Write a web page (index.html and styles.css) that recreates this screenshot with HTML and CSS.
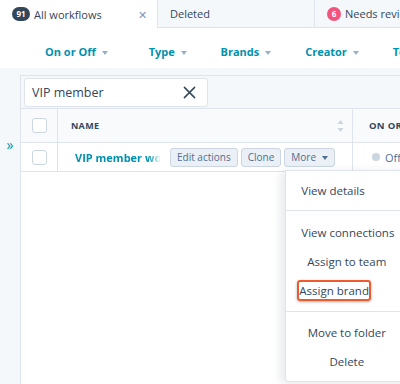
FILE: index.html
```html
<!DOCTYPE html>
<html lang="en">
<head>
  <meta charset="UTF-8">
  <title>workflows</title>
  <link rel="stylesheet" href="styles.css">
</head>
<body>

  <div class="tabs">
    <div class="tab active">
      <span class="badge">91</span>
      <span class="tab-label">All workflows</span>
      <span class="tab-close">&#x2715;</span>
    </div>
    <div class="tab">
      <span class="tab-label">Deleted</span>
    </div>
    <div class="tab last">
      <span class="badge pink">6</span>
      <span class="tab-label">Needs review</span>
    </div>
  </div>

  <div class="filters">
    <span class="filter first">On or Off <i class="caret"></i></span>
    <span class="filter">Type <i class="caret"></i></span>
    <span class="filter">Brands <i class="caret"></i></span>
    <span class="filter">Creator <i class="caret"></i></span>
    <span class="filter">Teams <i class="caret"></i></span>
  </div>

  <div class="main">
    <div class="sidebar">
      <span class="expand">&raquo;</span>
    </div>

    <div class="panel">
      <div class="toolbar">
        <div class="search">
          <span class="search-text">VIP member</span>
          <svg class="search-clear" width="13" height="13" viewBox="0 0 14 14">
            <path d="M1.5 1.5 L12.5 12.5 M12.5 1.5 L1.5 12.5" stroke="#33475b" stroke-width="1.6" stroke-linecap="round"/>
          </svg>
        </div>
      </div>

      <div class="table">
        <div class="row head">
          <div class="cell check"><span class="box"></span></div>
          <div class="cell name">
            <span>NAME</span>
            <svg class="sort" width="7" height="14" viewBox="0 0 7 14">
              <path d="M3.5 1 L6.5 5 H0.5 Z M3.5 13 L6.5 9 H0.5 Z" fill="#cbd6e2"/>
            </svg>
          </div>
          <div class="cell status">ON OR OFF</div>
        </div>
        <div class="row">
          <div class="cell check"><span class="box"></span></div>
          <div class="cell name">
            <span class="link">VIP member workflow</span>
            <span class="btn">Edit actions</span>
            <span class="btn">Clone</span>
            <span class="btn more">More <i class="caret dark"></i>
              <div class="menu">
                <div class="menu-group">
                  <div class="menu-item">View details</div>
                </div>
                <div class="menu-group">
                  <div class="menu-item">View connections</div>
                  <div class="menu-item center">Assign to team</div>
                  <div class="menu-item"><span class="marked">Assign brand</span></div>
                </div>
                <div class="menu-group">
                  <div class="menu-item center">Move to folder</div>
                  <div class="menu-item center">Delete</div>
                </div>
              </div>
            </span>
          </div>
          <div class="cell status"><span class="dot"></span>Off</div>
        </div>
      </div>
    </div>
  </div>

</body>
</html>
```

FILE: styles.css
```css
body {
  margin: 0;
  width: 400px;
  height: 384px;
  overflow: hidden;
  font-family: "Open Sans", "Noto Sans", sans-serif;
  color: #33475b;
  background-color: #fff;
}

/* tabs */
.tabs {
  display: flex;
  height: 28px;
}

.tab {
  flex: 0 0 157px;
  display: flex;
  align-items: center;
  box-sizing: border-box;
  padding-left: 12px;
  background-color: #f5f8fa;
  border-bottom: 1px solid #dfe3eb;
  border-left: 1px solid #dfe3eb;
  font-size: 11px;
  white-space: nowrap;
  overflow: hidden;
}

.tab.active {
  background-color: #fff;
  border: none;
  padding-right: 10px;
}

.tab.last {
  flex: 1;
}

.badge {
  display: inline-block;
  min-width: 18px;
  height: 14px;
  line-height: 14px;
  border-radius: 7px;
  background-color: #33475b;
  color: #fff;
  font-size: 8px;
  font-weight: bold;
  text-align: center;
  margin-right: 4px;
}

.badge.pink {
  min-width: 14px;
  background-color: #f2547d;
}

.tab-label {
  flex: 1;
}

.tab-close {
  color: #7c98b6;
  font-size: 11px;
}

/* filter row */
.filters {
  display: flex;
  align-items: center;
  height: 34px;
  padding: 6px 0 0 45px;
  gap: 34px;
  white-space: nowrap;
}

.filter {
  color: #0091ae;
  font-size: 11px;
  font-weight: bold;
}

.filter.first {
  margin-right: 7px;
}

.caret {
  display: inline-block;
  width: 0;
  height: 0;
  margin-left: 3px;
  vertical-align: middle;
  border-left: 3px solid transparent;
  border-right: 3px solid transparent;
  border-top: 4px solid #99afc4;
}

.caret.dark {
  border-top-color: #506e91;
}

/* main area */
.main {
  display: flex;
  height: 316px;
  background-color: #f5f8fa;
}

.sidebar {
  width: 20px;
  flex-shrink: 0;
  padding-top: 65px;
  text-align: center;
}

.expand {
  color: #0091ae;
  font-size: 14px;
  line-height: 14px;
}

.panel {
  flex: 1;
  margin-top: 7px;
  border-left: 1px solid #dfe3eb;
  border-top: 1px solid #dfe3eb;
  background-color: #fff;
}

.toolbar {
  padding: 2px 3px 1px;
  background-color: #f5f8fa;
}

.search {
  display: flex;
  align-items: center;
  width: 184px;
  height: 29px;
  box-sizing: border-box;
  padding: 0 11px 0 7px;
  background-color: #fff;
  border: 1px solid #dfe3eb;
  border-radius: 3px;
}

.search-text {
  flex: 1;
  font-size: 12.5px;
}

/* table */
.row {
  display: flex;
  height: 28px;
  border-top: 1px solid #dfe3eb;
  border-bottom: 1px solid #dfe3eb;
  margin-top: -1px;
}

.row.head {
  height: 33px;
  margin-top: 0;
  background-color: #f9fafc;
}

.cell {
  display: flex;
  align-items: center;
  box-sizing: border-box;
  white-space: nowrap;
}

.check {
  width: 37px;
  justify-content: center;
  border-right: 1px solid #dfe3eb;
}

.box {
  width: 13px;
  height: 13px;
  border: 1px solid #cbd6e2;
  border-radius: 3px;
  background-color: #fff;
}

.name {
  width: 295px;
  padding-left: 13px;
  border-right: 1px solid #dfe3eb;
}

.head .name span {
  flex: 1;
  font-size: 9px;
  font-weight: bold;
  letter-spacing: 0.3px;
}

.sort {
  margin-right: 8px;
}

.status {
  flex: 1;
  padding-left: 16px;
  font-size: 9.5px;
  font-weight: bold;
  letter-spacing: 0.3px;
  overflow: hidden;
}

.row:not(.head) .status {
  padding-left: 19px;
  font-weight: normal;
  font-size: 11px;
  letter-spacing: 0;
  color: #516f90;
}

.dot {
  width: 8px;
  height: 8px;
  border-radius: 50%;
  background-color: #cbd6e2;
  margin-right: 5px;
}

.link {
  width: 86px;
  margin-left: 4px;
  margin-right: 9px;
  overflow: hidden;
  color: #0091ae;
  font-size: 11px;
  font-weight: bold;
  -webkit-mask-image: linear-gradient(to right, #000 85%, transparent);
  mask-image: linear-gradient(to right, #000 85%, transparent);
}

.btn {
  position: relative;
  height: 17px;
  line-height: 17px;
  padding: 0 6px;
  margin-right: 3px;
  background-color: #eaf0f6;
  border: 1px solid #cbd6e2;
  border-radius: 3px;
  color: #506e91;
  font-size: 10px;
}

/* dropdown */
.menu {
  position: absolute;
  top: 21px;
  left: 0;
  width: 130px;
  background-color: #fff;
  border: 1px solid #dfe3eb;
  border-radius: 0 0 0 3px;
  box-shadow: -4px 2px 10px rgba(45, 62, 80, 0.12);
  line-height: normal;
  z-index: 2;
}

.menu-group {
  padding: 7px 0 6px;
  border-bottom: 1px solid #dfe3eb;
}

.menu-group:first-child {
  padding: 5px 0;
}

.menu-group:last-child {
  border-bottom: none;
  padding: 6px 0 5px;
}

.menu-item {
  height: 29px;
  line-height: 29px;
  padding-left: 15px;
  font-size: 11.5px;
  color: #33475b;
  white-space: nowrap;
}

.menu-item.center {
  width: 121px;
  padding-left: 0;
  text-align: center;
}

.marked {
  padding: 1px 0;
  margin-left: -4px;
  border: 2px solid #ef5b2f;
  border-radius: 3px;
  box-shadow: 0 1px 3px rgba(0, 0, 0, 0.3);
}
```
